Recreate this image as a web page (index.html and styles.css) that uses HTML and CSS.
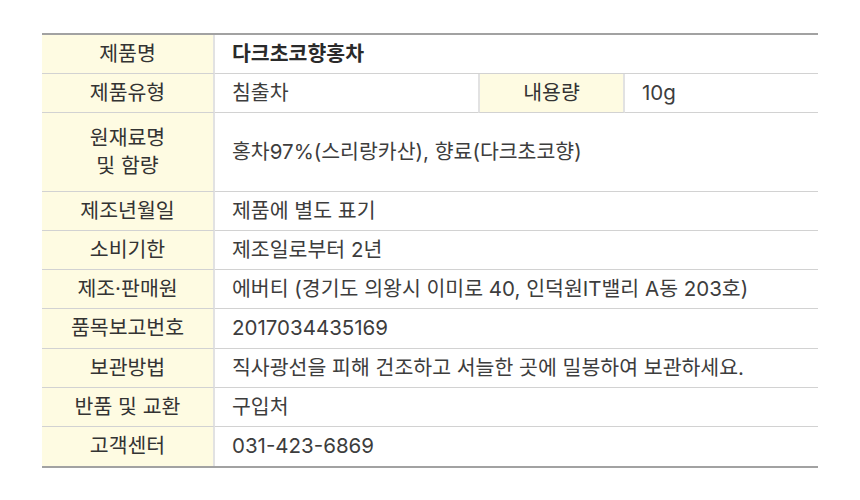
FILE: index.html
```html
<!DOCTYPE html>
<html lang="ko">
<head>
<meta charset="utf-8">
<title>상품정보</title>
<link rel="stylesheet" href="styles.css">
</head>
<body>
<div class="spec">
  <div class="th">제품명</div>
  <div class="td wide title">다크초코향홍차</div>

  <div class="th">제품유형</div>
  <div class="td">침출차</div>
  <div class="th mid">내용량</div>
  <div class="td">10g</div>

  <div class="th tall">원재료명<br>및 함량</div>
  <div class="td wide tall">홍차97%(스리랑카산), 향료(다크초코향)</div>

  <div class="th">제조년월일</div>
  <div class="td wide">제품에 별도 표기</div>

  <div class="th">소비기한</div>
  <div class="td wide">제조일로부터 2년</div>

  <div class="th">제조·판매원</div>
  <div class="td wide">에버티 (경기도 의왕시 이미로 40, 인덕원IT밸리 A동 203호)</div>

  <div class="th">품목보고번호</div>
  <div class="td wide">2017034435169</div>

  <div class="th">보관방법</div>
  <div class="td wide">직사광선을 피해 건조하고 서늘한 곳에 밀봉하여 보관하세요.</div>

  <div class="th">반품 및 교환</div>
  <div class="td wide">구입처</div>

  <div class="th last">고객센터</div>
  <div class="td wide last">031-423-6869</div>
</div>
</body>
</html>
```

FILE: styles.css
```css
* { box-sizing: border-box; }

html, body {
  margin: 0;
  padding: 0;
  background: #ffffff;
}

body {
  font-family: Inter, "Noto Sans CJK KR", sans-serif;
  font-size: 20.5px;
  color: #3a3a3a;
}

.spec {
  display: grid;
  grid-template-columns: 173px 263px 147px 193px;
  grid-auto-rows: 39.2px;
  width: 776px;
  margin: 33px 0 0 42px;
  border-top: 2px solid #a2a2a2;
  border-bottom: 2px solid #a2a2a2;
}

.th,
.td {
  display: flex;
  align-items: center;
  border-bottom: 1px solid #d2d2d2;
  line-height: 28px;
}

.th {
  justify-content: center;
  text-align: center;
  background: #fefbe2;
  border-right: 2px solid #e2e2e2;
  color: #333333;
}

.th.mid {
  border-left: 2px solid #e2e2e2;
}

.td {
  padding-left: 17px;
  color: #3d3d3d;
}

.td.wide {
  grid-column: span 3;
}

.tall {
  grid-row: span 2;
}

.title {
  font-weight: 700;
  color: #2a2a2a;
}

.last {
  border-bottom: none;
}
```
